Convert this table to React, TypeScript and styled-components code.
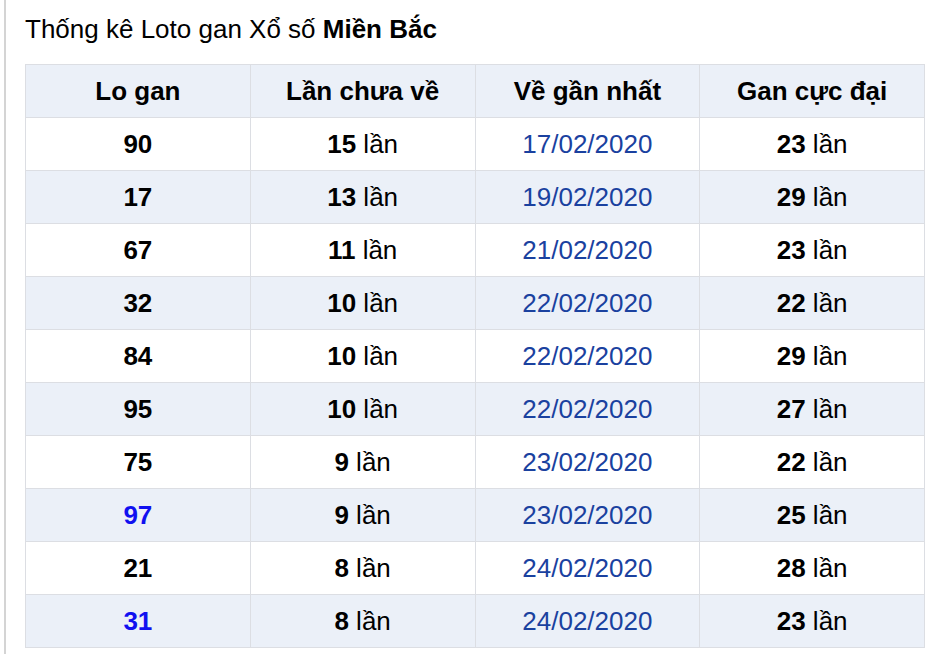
import React from "react";
import styled, { createGlobalStyle } from "styled-components";

const Global = createGlobalStyle`
  html, body { margin: 0; padding: 0; background: #fff; }
  body { font-family: "Liberation Sans", Arial, sans-serif; color: #000; }
`;

const Frame = styled.div`
  margin-left: 4px;
  width: 937px;
  height: 654px;
  border-left: 2px solid #d4d4d4;
  border-right: 2px solid #d4d4d4;
  padding: 12px 19px 0 19px;
  box-sizing: content-box;
`;

const Title = styled.h2`
  margin: 0 0 18px 0;
  font-size: 26px;
  font-weight: normal;
  line-height: 34px;
  b { font-weight: bold; }
`;

const Table = styled.table`
  width: 900px;
  border-collapse: collapse;
  table-layout: fixed;
`;

const Row = styled.tr<{ $alt: boolean }>`
  background: ${(p) => (p.$alt ? "#ebf0f8" : "#ffffff")};
`;

const HeadCell = styled.th`
  height: 52px;
  border: 1px solid #dcdee3;
  font-size: 26px;
  font-weight: bold;
  text-align: center;
  padding: 0;
`;

const Cell = styled.td`
  height: 52px;
  border: 1px solid #dcdee3;
  font-size: 26px;
  text-align: center;
  padding: 0;
`;

const Num = styled.b<{ $blue?: boolean }>`
  color: ${(p) => (p.$blue ? "#1010f0" : "#000")};
`;

const DateText = styled.span`
  color: #1a419f;
`;

const rows: [string, number, string, number, boolean][] = [
  ["90", 15, "17/02/2020", 23, false],
  ["17", 13, "19/02/2020", 29, false],
  ["67", 11, "21/02/2020", 23, false],
  ["32", 10, "22/02/2020", 22, false],
  ["84", 10, "22/02/2020", 29, false],
  ["95", 10, "22/02/2020", 27, false],
  ["75", 9, "23/02/2020", 22, false],
  ["97", 9, "23/02/2020", 25, true],
  ["21", 8, "24/02/2020", 28, false],
  ["31", 8, "24/02/2020", 23, true],
];

export default function App() {
  return (
    <>
      <Global />
      <Frame>
        <Title>
          Thống kê Loto gan Xổ số <b>Miền Bắc</b>
        </Title>
        <Table>
          <thead>
            <Row $alt>
              <HeadCell>Lo gan</HeadCell>
              <HeadCell>Lần chưa về</HeadCell>
              <HeadCell>Về gần nhất</HeadCell>
              <HeadCell>Gan cực đại</HeadCell>
            </Row>
          </thead>
          <tbody>
            {rows.map(([n, c, d, m, blue], i) => (
              <Row key={i} $alt={i % 2 === 1}>
                <Cell>
                  <Num $blue={blue}>{n}</Num>
                </Cell>
                <Cell>
                  <Num>{c}</Num> lần
                </Cell>
                <Cell>
                  <DateText>{d}</DateText>
                </Cell>
                <Cell>
                  <Num>{m}</Num> lần
                </Cell>
              </Row>
            ))}
          </tbody>
        </Table>
      </Frame>
    </>
  );
}
